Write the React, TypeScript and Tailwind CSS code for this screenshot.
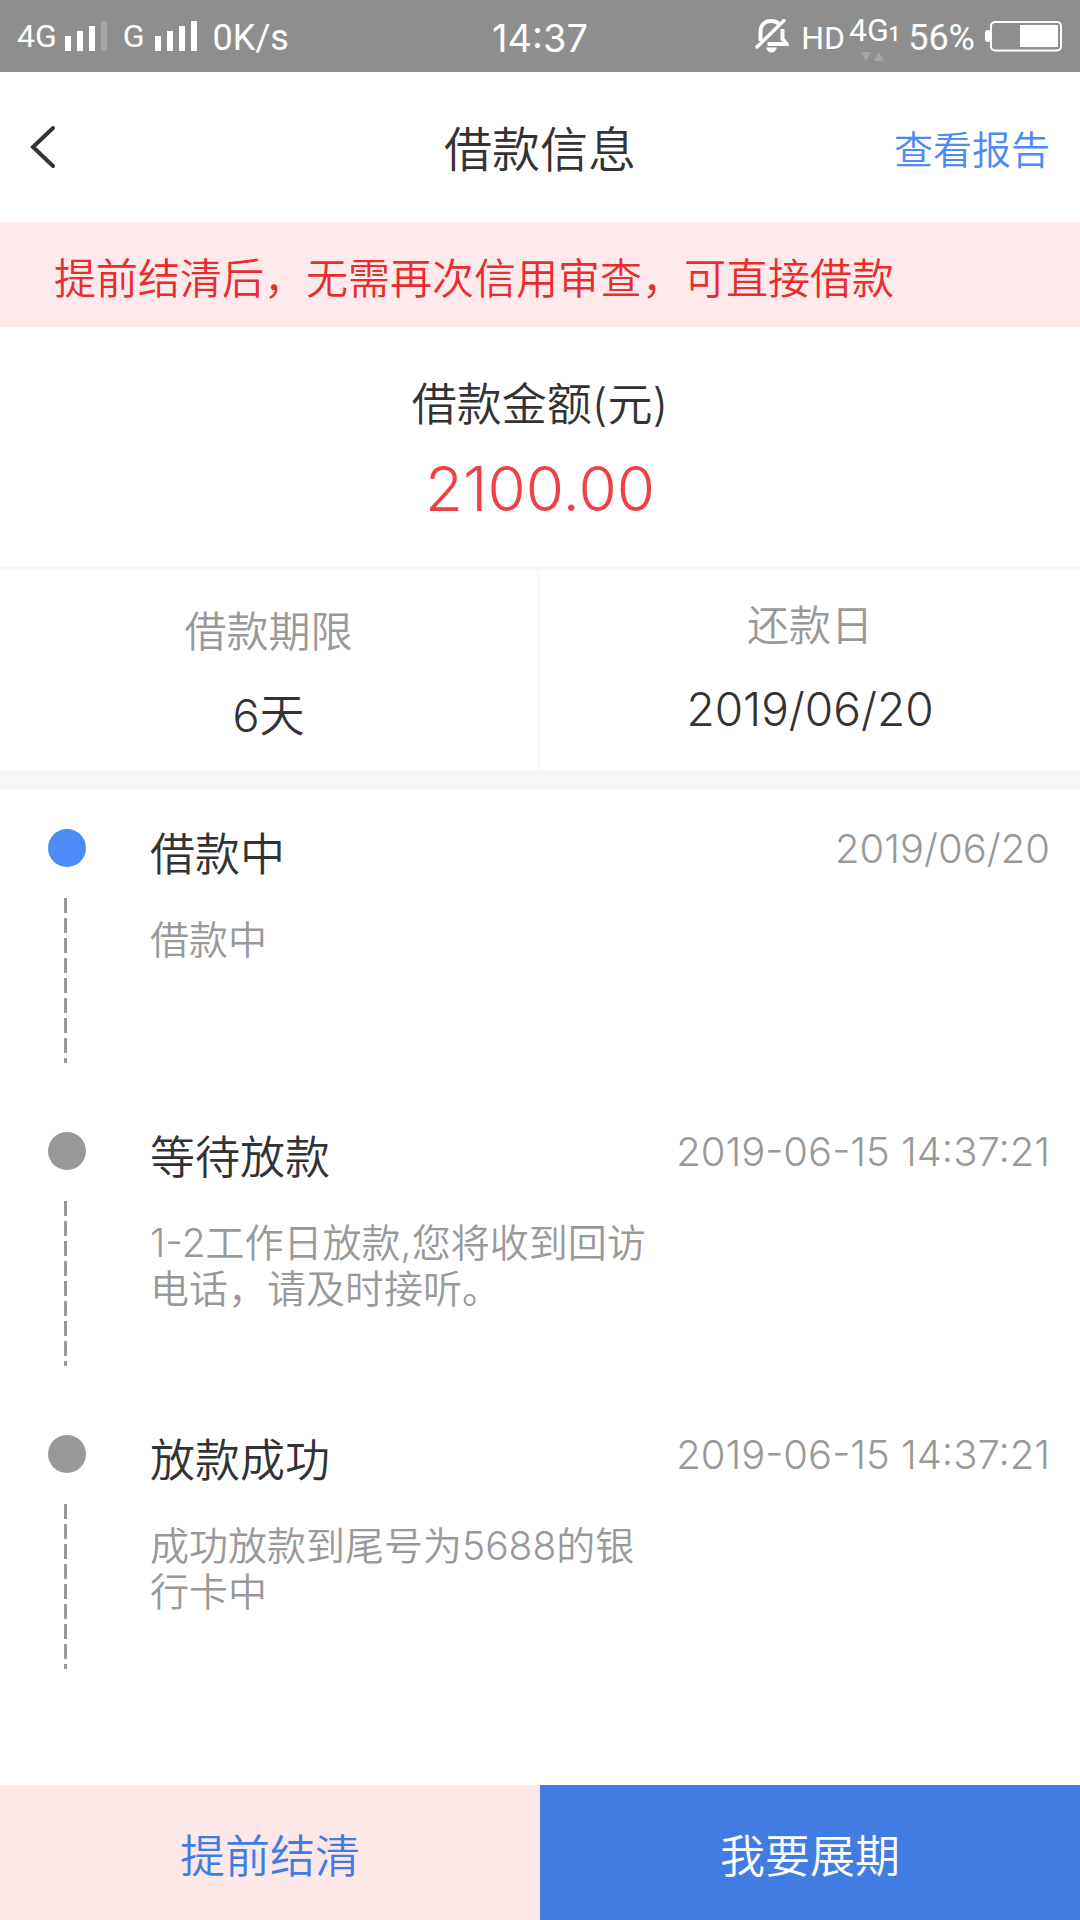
// Loan detail screen

interface TimelineStep {
    id: string;
    title: string;
    date: string;
    description: string;
    active?: boolean;
}

const STEPS: TimelineStep[] = [
    { id: 'borrowing', title: '借款中', date: '2019/06/20', description: '借款中', active: true },
    {
        id: 'waiting',
        title: '等待放款',
        date: '2019-06-15 14:37:21',
        description: '1-2工作日放款,您将收到回访电话，请及时接听。',
    },
    {
        id: 'success',
        title: '放款成功',
        date: '2019-06-15 14:37:21',
        description: '成功放款到尾号为5688的银行卡中',
    },
];

function SignalBars({ level }: { level: number }) {
    return (
        <svg width="42" height="30" viewBox="0 0 42 30" fill="#fff" aria-hidden="true">
            {[15, 20, 25, 30].map((height, i) => (
                <rect key={height} x={i * 12} y={30 - height} width="6" height={height} opacity={i < level ? 1 : 0.2} />
            ))}
        </svg>
    );
}

function MutedBell() {
    return (
        <svg width="34" height="34" viewBox="0 0 34 34" fill="none" stroke="#fff" aria-hidden="true">
            <path d="M5.500 22V13C5.500 6 10 2 16 2C19 2 22 3 23.500 4.500" strokeWidth="4" />
            <path d="M27.500 10V20L31.500 25H12.500" strokeWidth="4" />
            <path d="M2 28L29 1.500" strokeWidth="3.500" strokeLinecap="round" />
            <path d="M11 28.500H22C21 31.500 19 33.500 16.500 33.500C14 33.500 12 31.500 11 28.500Z" fill="#fff" stroke="none" />
        </svg>
    );
}

function Battery() {
    return (
        <svg width="78" height="31" viewBox="0 0 78 31" fill="none" aria-hidden="true">
            <path d="M5 9H3Q0 9 0 12V18Q0 21 3 21H5Z" fill="#fff" />
            <rect x="6" y="1" width="70" height="28.500" rx="4" stroke="#fff" strokeWidth="2" />
            <rect x="35" y="4" width="38" height="22" fill="#fff" />
        </svg>
    );
}

function StatusBar() {
    return (
        <div className="grid h-[72px] grid-cols-[1fr_auto_1fr] items-center bg-[#8e8e8e] px-[17px] font-['Roboto',sans-serif] font-normal text-white">
            <div className="flex items-center">
                <span className="text-[32px] leading-10">4G</span>
                <span className="ml-2">
                    <SignalBars level={3} />
                </span>
                <span className="ml-4 text-[32px] leading-10">G</span>
                <span className="ml-2.5">
                    <SignalBars level={4} />
                </span>
                <span className="ml-4 pt-1 text-[36px] leading-10">0K/s</span>
            </div>
            <span className="pt-1 font-['Inter',sans-serif] text-[38px] leading-10">14:37</span>
            <div className="flex items-center justify-end">
                <MutedBell />
                <span className="ml-3 pt-1 text-[32px] leading-10">HD</span>
                <span className="relative ml-1 flex items-baseline pb-2 text-[32px] leading-8">
                    4G
                    <span className="text-[20px] font-medium">1</span>
                    <svg className="absolute -bottom-1 left-3" width="24" height="10" viewBox="0 0 24 10" fill="#fff" opacity="0.2" aria-hidden="true">
                        <path d="M0 0H10L5 9Z" />
                        <path d="M13 9H23L18 0Z" />
                    </svg>
                </span>
                <span className="ml-2 pt-1 text-[36px] leading-10">56%</span>
                <span className="ml-2.5">
                    <Battery />
                </span>
            </div>
        </div>
    );
}

function TimelineItem({ step }: { step: TimelineStep }) {
    return (
        <li className="flex pt-10 pb-[29px] pl-12 pr-[30px]">
            <div className="w-[38px] shrink-0">
                <div className={`size-[38px] rounded-full ${step.active ? 'bg-[#4a8bf5]' : 'bg-[#999999]'}`} />
                <div className="mt-[31px] ml-4 h-[165px] w-[3px] bg-[repeating-linear-gradient(to_bottom,#999999_0,#999999_15px,transparent_15px,transparent_20px)]" />
            </div>
            <div className="ml-16 min-w-0 flex-1">
                <div className="flex items-start justify-between">
                    <h2 className="text-[45px] leading-[52px] text-[#333333]">{step.title}</h2>
                    <time className="text-[40px] leading-10 text-[#999999]">{step.date}</time>
                </div>
                <p className="mt-9 max-w-[520px] text-[39px] leading-[46px] text-[#999999]">{step.description}</p>
            </div>
        </li>
    );
}

export default function LoanInfoPage() {
    return (
        <div className="flex min-h-screen flex-col bg-white font-['Inter','Noto_Sans_CJK_SC',sans-serif] font-[350] text-[#333333]">
            <StatusBar />

            <header className="grid h-[150px] grid-cols-[1fr_auto_1fr] items-center px-[30px]">
                <button type="button" aria-label="返回" className="justify-self-start">
                    <svg width="26" height="44" viewBox="0 0 26 44" fill="none" stroke="#333" strokeWidth="4" strokeLinecap="round">
                        <path d="M23 3L3 22L23 41" />
                    </svg>
                </button>
                <h1 className="pt-1.5 text-[48px] leading-[60px]">借款信息</h1>
                <a href="#report" className="justify-self-end pt-1.5 text-[39px] leading-[60px] text-[#4a8bf5]">
                    查看报告
                </a>
            </header>

            <p className="bg-[#ffeaeb] pt-7 pb-5 pl-[54px] text-[42px] leading-[57px] text-[#e62e2e]">
                提前结清后，无需再次信用审查，可直接借款
            </p>

            <section className="border-b-3 border-[#f8f8f8] pt-12 pb-10 text-center">
                <p className="text-[45px] leading-[60px]">借款金额(元)</p>
                <p className="mt-4 text-[62px] leading-[76px] text-[#ef4044]">2100.00</p>
            </section>

            {/* Term and due date */}
            <section className="grid h-[219px] grid-cols-2 border-b-18 border-[#f7f7f7] text-center">
                <div className="border-r-3 border-[#fafafa] pt-[38px]">
                    <p className="text-[42px] leading-[48px] text-[#999999]">借款期限</p>
                    <p className="mt-9 text-[45px] leading-[48px]">6天</p>
                </div>
                <div className="pt-8">
                    <p className="text-[42px] leading-[48px] text-[#999999]">还款日</p>
                    <p className="mt-9 text-[46px] leading-[46px]">2019/06/20</p>
                </div>
            </section>

            <ol>
                {STEPS.map((step) => (
                    <TimelineItem key={step.id} step={step} />
                ))}
            </ol>

            <footer className="mt-auto grid h-[135px] grid-cols-2 text-[45px]">
                <button type="button" className="bg-[#fde8e8] pt-2 text-[#417ce2]">
                    提前结清
                </button>
                <button type="button" className="bg-[#417ce2] pt-2 text-white">
                    我要展期
                </button>
            </footer>
        </div>
    );
}
